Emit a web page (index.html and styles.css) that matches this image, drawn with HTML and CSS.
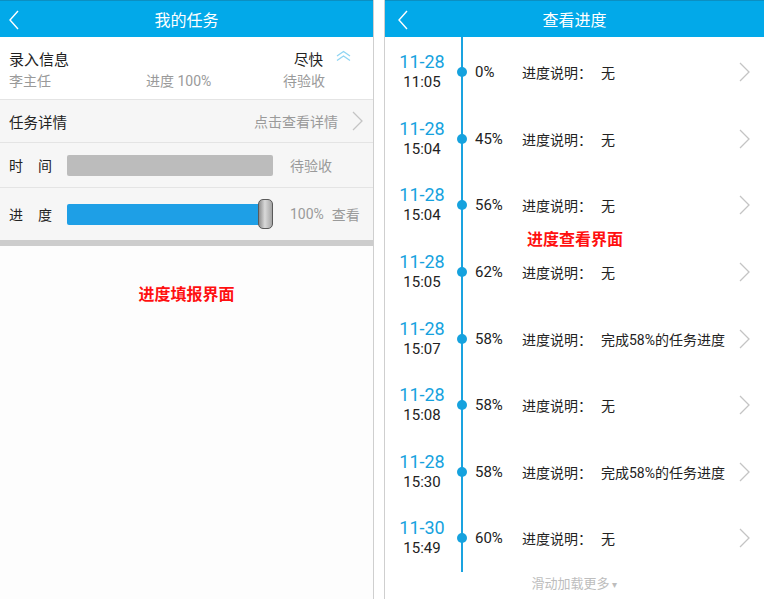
FILE: index.html
```html
<!DOCTYPE html>
<html lang="zh-CN">
<head>
  <meta charset="UTF-8" />
  <meta name="viewport" content="width=device-width, initial-scale=1.0"/>
  <title>任务进度</title>
  <link rel="stylesheet" href="styles.css">
</head>
<body>
  <div class="screens">
    <!-- 进度填报 -->
    <section class="panel panel-left">
      <header class="bar">
        <svg class="back" width="12" height="20" viewBox="0 0 12 20"><polyline points="10,1 2,10 10,19" fill="none" stroke="#fff" stroke-width="1.4"/></svg>
        <h1>我的任务</h1>
      </header>

      <div class="task-head">
        <div class="task-line">
          <span class="task-title">录入信息</span>
          <span class="urgent">尽快</span>
          <svg class="up" width="15" height="12" viewBox="0 0 15 12"><polyline points="1,6 7.5,1.5 14,6" fill="none" stroke="#8fd5f3" stroke-width="1.3"/><polyline points="1,10.5 7.5,6 14,10.5" fill="none" stroke="#8fd5f3" stroke-width="1.3"/></svg>
        </div>
        <div class="task-sub">
          <span>李主任</span>
          <span>进度 100%</span>
          <span>待验收</span>
        </div>
      </div>

      <div class="row row-detail">
        <span class="label-text">任务详情</span>
        <span class="hint">点击查看详情</span>
        <svg class="chev" width="11" height="20" viewBox="0 0 11 20"><polyline points="1,1 10,10 1,19" fill="none" stroke="#c4c4c4" stroke-width="1.3"/></svg>
      </div>

      <div class="row row-bar">
        <span class="label">时间</span>
        <div class="track track-time"></div>
        <span class="hint">待验收</span>
      </div>

      <div class="row row-bar row-progress">
        <span class="label">进度</span>
        <div class="track track-progress">
          <div class="fill"></div>
          <div class="thumb"></div>
        </div>
        <span class="hint">100%</span>
        <span class="hint">查看</span>
      </div>

      <div class="divider"></div>
      <p class="note">进度填报界面</p>
    </section>

    <!-- 进度查看 -->
    <section class="panel panel-right">
      <header class="bar">
        <svg class="back" width="12" height="20" viewBox="0 0 12 20"><polyline points="10,1 2,10 10,19" fill="none" stroke="#fff" stroke-width="1.4"/></svg>
        <h1>查看进度</h1>
      </header>

      <ul class="timeline">
        <li class="entry"><div class="when"><b>11-28</b><span>11:05</span></div><i class="dot"></i><span class="pct">0%</span><span class="desc">进度说明：<em>无</em></span><svg class="chev" width="11" height="20" viewBox="0 0 11 20"><polyline points="1,1 10,10 1,19" fill="none" stroke="#c4c4c4" stroke-width="1.3"/></svg></li>
        <li class="entry"><div class="when"><b>11-28</b><span>15:04</span></div><i class="dot"></i><span class="pct">45%</span><span class="desc">进度说明：<em>无</em></span><svg class="chev" width="11" height="20" viewBox="0 0 11 20"><polyline points="1,1 10,10 1,19" fill="none" stroke="#c4c4c4" stroke-width="1.3"/></svg></li>
        <li class="entry"><div class="when"><b>11-28</b><span>15:04</span></div><i class="dot"></i><span class="pct">56%</span><span class="desc">进度说明：<em>无</em></span><svg class="chev" width="11" height="20" viewBox="0 0 11 20"><polyline points="1,1 10,10 1,19" fill="none" stroke="#c4c4c4" stroke-width="1.3"/></svg></li>
        <li class="entry"><div class="when"><b>11-28</b><span>15:05</span></div><i class="dot"></i><span class="pct">62%</span><span class="desc">进度说明：<em>无</em></span><svg class="chev" width="11" height="20" viewBox="0 0 11 20"><polyline points="1,1 10,10 1,19" fill="none" stroke="#c4c4c4" stroke-width="1.3"/></svg></li>
        <li class="entry"><div class="when"><b>11-28</b><span>15:07</span></div><i class="dot"></i><span class="pct">58%</span><span class="desc">进度说明：<em>完成58%的任务进度</em></span><svg class="chev" width="11" height="20" viewBox="0 0 11 20"><polyline points="1,1 10,10 1,19" fill="none" stroke="#c4c4c4" stroke-width="1.3"/></svg></li>
        <li class="entry"><div class="when"><b>11-28</b><span>15:08</span></div><i class="dot"></i><span class="pct">58%</span><span class="desc">进度说明：<em>无</em></span><svg class="chev" width="11" height="20" viewBox="0 0 11 20"><polyline points="1,1 10,10 1,19" fill="none" stroke="#c4c4c4" stroke-width="1.3"/></svg></li>
        <li class="entry"><div class="when"><b>11-28</b><span>15:30</span></div><i class="dot"></i><span class="pct">58%</span><span class="desc">进度说明：<em>完成58%的任务进度</em></span><svg class="chev" width="11" height="20" viewBox="0 0 11 20"><polyline points="1,1 10,10 1,19" fill="none" stroke="#c4c4c4" stroke-width="1.3"/></svg></li>
        <li class="entry"><div class="when"><b>11-30</b><span>15:49</span></div><i class="dot"></i><span class="pct">60%</span><span class="desc">进度说明：<em>无</em></span><svg class="chev" width="11" height="20" viewBox="0 0 11 20"><polyline points="1,1 10,10 1,19" fill="none" stroke="#c4c4c4" stroke-width="1.3"/></svg></li>
      </ul>
      <p class="more">滑动加载更多 <span class="caret">▾</span></p>

      <p class="note note-float">进度查看界面</p>
    </section>
  </div>
</body>
</html>
```

FILE: styles.css
```css
* { box-sizing: border-box; }
body { margin: 0; background: #fff; font-family: Roboto, "Noto Sans CJK SC", sans-serif; color: #222; }
.screens { display: flex; gap: 10px; height: 599px; }
.panel { position: relative; height: 599px; overflow: hidden; }
.panel-left { width: 374px; background: #fdfdfd; border-right: 1px solid #cfcfcf; }
.panel-right { flex: 1; background: #fff; border-left: 1px solid #cfcfcf; }

.bar { height: 37px; background: #02a9e9; border-top: 1px solid #0b8fc2; display: flex; align-items: center; justify-content: center; position: relative; }
.bar h1 { margin: 0; font-size: 16px; font-weight: normal; color: #fff; }
.back { position: absolute; left: 8px; top: 9px; }
.panel-right .back { left: 12px; }

/* left form */
.task-head { background: #fff; height: 63px; padding: 10px 0 0 9px; border-bottom: 1px solid #e4e4e4; }
.task-line { display: flex; align-items: center; height: 22px; }
.task-title { font-size: 15px; color: #1e1e1e; }
.urgent { margin-left: auto; font-size: 14.5px; color: #222; }
.up { margin: 0 22px 4px 13px; }
.task-sub { display: grid; grid-template-columns: 137px 137px auto; height: 22px; align-items: center; font-size: 14px; color: #9a9a9a; }

.row { display: flex; align-items: center; padding-left: 9px; background: #f6f6f6; border-bottom: 1px solid #e4e4e4; font-size: 14px; white-space: nowrap; }
.row-detail { height: 43px; }
.row-detail .label-text { color: #222; font-size: 14.5px; }
.row-detail .hint { margin-left: auto; }
.row-detail .chev { margin: 0 10px 0 14px; }
.hint { color: #9a9a9a; font-size: 14px; }

.row-bar { height: 45px; }
.row-progress { height: 52px; border-bottom: none; }
.label { width: 58px; flex-shrink: 0; letter-spacing: 15px; color: #222; font-size: 14px; }
.track { width: 206px; flex-shrink: 0; height: 21px; border-radius: 2px; margin-right: 17px; }
.track-time { background: #bcbcbc; }
.track-progress { display: flex; align-items: center; }
.fill { width: 196px; height: 21px; background: #1e9fe6; border-radius: 2px 0 0 2px; }
.thumb { width: 15px; height: 30px; flex-shrink: 0; margin-left: -5px; border: 1px solid #5a5a5a; border-radius: 5px; background: linear-gradient(90deg, #8d8d8d, #d9d9d9 45%, #a5a5a5); }
.row-progress .hint + .hint { margin-left: 8px; }

.divider { height: 6px; background: #cdcdcd; }
.note { margin: 0; text-align: center; font-family: "Noto Sans CJK SC", sans-serif; font-size: 16px; font-weight: bold; color: #ff1010; }
.panel-left .note { padding-top: 35px; }
.note-float { position: absolute; left: 142px; top: 226px; }

/* right timeline */
.timeline { list-style: none; margin: 0; padding: 2px 0 0; background: linear-gradient(#1aa3e0, #1aa3e0) 76px 0 / 2px 100% no-repeat; }
.entry { height: 66.6px; display: flex; align-items: center; }
.when { width: 76px; display: flex; flex-direction: column; align-items: center; padding-right: 2px; line-height: 21px; }
.when b { font-weight: normal; font-size: 18px; color: #16a2de; }
.when span { font-size: 15px; color: #222; }
.dot { width: 10px; height: 10px; border-radius: 50%; background: #16a2de; margin-left: -4px; margin-right: 8px; }
.pct { width: 47px; font-size: 15px; }
.desc { flex: 1; font-size: 14px; color: #222; }
.desc em { font-style: normal; margin-left: 9px; }
.entry .chev { margin-right: 14px; }
.more { margin: 0; padding-top: 1px; text-align: center; font-family: "Noto Sans CJK SC", sans-serif; font-size: 13px; color: #bdbdbd; }
.caret { font-size: 10px; }
```
